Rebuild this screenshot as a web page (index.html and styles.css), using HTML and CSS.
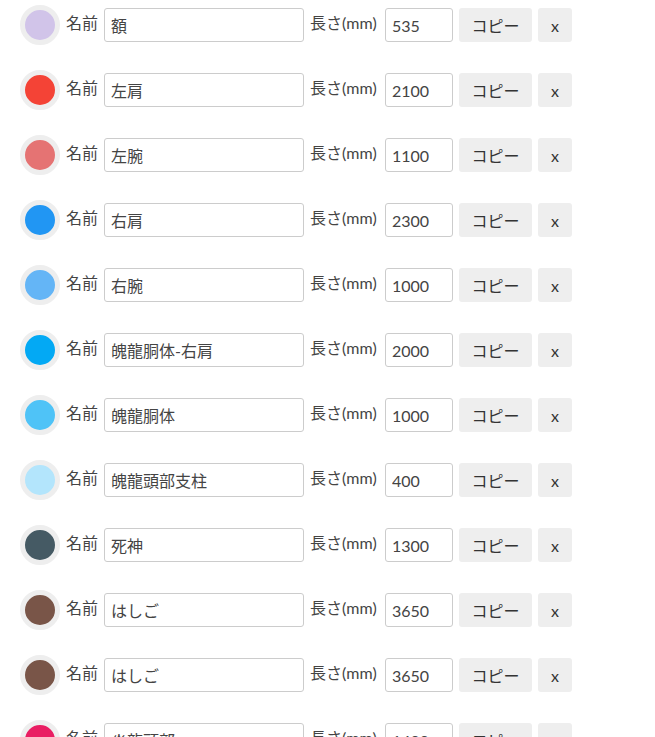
FILE: index.html
```html
<html>
	<head>
		<meta charset="utf-8">
		<link rel="stylesheet" href="styles.css">
	</head>
	<body>
		<div class="parts">
			<div class="part">
				<span class="swatch" style="background-color: #d1c4e9"></span>
				<label class="label">名前</label>
				<input class="name" type="text" value="額">
				<label class="label mm">長さ(mm)</label>
				<input class="length" type="text" value="535">
				<button class="btn copy">コピー</button>
				<button class="btn">x</button>
			</div>
			<div class="part">
				<span class="swatch" style="background-color: #f44336"></span>
				<label class="label">名前</label>
				<input class="name" type="text" value="左肩">
				<label class="label mm">長さ(mm)</label>
				<input class="length" type="text" value="2100">
				<button class="btn copy">コピー</button>
				<button class="btn">x</button>
			</div>
			<div class="part">
				<span class="swatch" style="background-color: #e57373"></span>
				<label class="label">名前</label>
				<input class="name" type="text" value="左腕">
				<label class="label mm">長さ(mm)</label>
				<input class="length" type="text" value="1100">
				<button class="btn copy">コピー</button>
				<button class="btn">x</button>
			</div>
			<div class="part">
				<span class="swatch" style="background-color: #2196f3"></span>
				<label class="label">名前</label>
				<input class="name" type="text" value="右肩">
				<label class="label mm">長さ(mm)</label>
				<input class="length" type="text" value="2300">
				<button class="btn copy">コピー</button>
				<button class="btn">x</button>
			</div>
			<div class="part">
				<span class="swatch" style="background-color: #64b5f6"></span>
				<label class="label">名前</label>
				<input class="name" type="text" value="右腕">
				<label class="label mm">長さ(mm)</label>
				<input class="length" type="text" value="1000">
				<button class="btn copy">コピー</button>
				<button class="btn">x</button>
			</div>
			<div class="part">
				<span class="swatch" style="background-color: #03a9f4"></span>
				<label class="label">名前</label>
				<input class="name" type="text" value="魄龍胴体-右肩">
				<label class="label mm">長さ(mm)</label>
				<input class="length" type="text" value="2000">
				<button class="btn copy">コピー</button>
				<button class="btn">x</button>
			</div>
			<div class="part">
				<span class="swatch" style="background-color: #4fc3f7"></span>
				<label class="label">名前</label>
				<input class="name" type="text" value="魄龍胴体">
				<label class="label mm">長さ(mm)</label>
				<input class="length" type="text" value="1000">
				<button class="btn copy">コピー</button>
				<button class="btn">x</button>
			</div>
			<div class="part">
				<span class="swatch" style="background-color: #b3e5fc"></span>
				<label class="label">名前</label>
				<input class="name" type="text" value="魄龍頭部支柱">
				<label class="label mm">長さ(mm)</label>
				<input class="length" type="text" value="400">
				<button class="btn copy">コピー</button>
				<button class="btn">x</button>
			</div>
			<div class="part">
				<span class="swatch" style="background-color: #455a64"></span>
				<label class="label">名前</label>
				<input class="name" type="text" value="死神">
				<label class="label mm">長さ(mm)</label>
				<input class="length" type="text" value="1300">
				<button class="btn copy">コピー</button>
				<button class="btn">x</button>
			</div>
			<div class="part">
				<span class="swatch" style="background-color: #795548"></span>
				<label class="label">名前</label>
				<input class="name" type="text" value="はしご">
				<label class="label mm">長さ(mm)</label>
				<input class="length" type="text" value="3650">
				<button class="btn copy">コピー</button>
				<button class="btn">x</button>
			</div>
			<div class="part">
				<span class="swatch" style="background-color: #795548"></span>
				<label class="label">名前</label>
				<input class="name" type="text" value="はしご">
				<label class="label mm">長さ(mm)</label>
				<input class="length" type="text" value="3650">
				<button class="btn copy">コピー</button>
				<button class="btn">x</button>
			</div>
			<div class="part">
				<span class="swatch" style="background-color: #e91e63"></span>
				<label class="label">名前</label>
				<input class="name" type="text" value="炎龍頭部">
				<label class="label mm">長さ(mm)</label>
				<input class="length" type="text" value="1400">
				<button class="btn copy">コピー</button>
				<button class="btn">x</button>
			</div>
		</div>
	</body>
</html>
```

FILE: styles.css
```css
* {
	box-sizing: border-box;
	padding: 0;
	margin: 0;
}
html {
	background-color: white;
	font-family: Lato, "Noto Sans CJK JP", sans-serif;
	font-size: 16px;
	color: #444;
}
.parts {
	padding-left: 20px;
}
.part {
	display: flex;
	align-items: flex-start;
	gap: 6px;
	height: 65px;
	padding-top: 5px;
}
.swatch {
	display: block;
	width: 40px;
	height: 40px;
	border-radius: 50%;
	border: 5px solid #eee;
}
.label {
	line-height: 22px;
	padding-top: 7px;
	color: #444;
}
.label.mm {
	width: 69px;
}
.name, .length {
	margin-top: 3px;
	height: 34px;
	padding: 0 6px;
	border: 1px solid #ccc;
	border-radius: 3px;
	font-family: Lato, "Noto Sans CJK JP", sans-serif;
	font-size: 16px;
	color: #444;
	outline: none;
}
.name {
	width: 200px;
}
.length {
	width: 68px;
}
.btn {
	margin-top: 3px;
	height: 34px;
	width: 34px;
	border: none;
	border-radius: 3px;
	background-color: #eee;
	font-family: Lato, "Noto Sans CJK JP", sans-serif;
	font-size: 16px;
	color: #333;
}
.btn.copy {
	width: 73px;
}
```
